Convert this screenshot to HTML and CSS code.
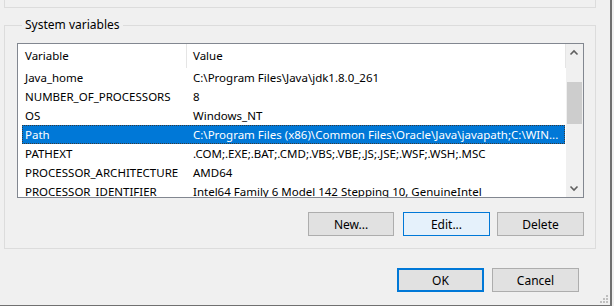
FILE: index.html
```html
<!DOCTYPE html>
<html>
<head>
<meta charset="utf-8">
<link rel="stylesheet" href="styles.css">
</head>
<body>
<div class="window">
  <div class="top-group"></div>
  <fieldset class="group">
    <legend class="legend">System variables</legend>
    <div class="list">
      <div class="list-body">
        <div class="header">
          <div class="hcell hcell-var">Variable</div>
          <div class="hcell hcell-val">Value</div>
        </div>
        <div class="row"><span class="c1">Java_home</span><span class="c2">C:\Program Files\Java\jdk1.8.0_261</span></div>
        <div class="row"><span class="c1">NUMBER_OF_PROCESSORS</span><span class="c2">8</span></div>
        <div class="row"><span class="c1">OS</span><span class="c2">Windows_NT</span></div>
        <div class="row selected"><span class="c1">Path</span><span class="c2">C:\Program Files (x86)\Common Files\Oracle\Java\javapath;C:\WIN...</span></div>
        <div class="row"><span class="c1">PATHEXT</span><span class="c2">.COM;.EXE;.BAT;.CMD;.VBS;.VBE;.JS;.JSE;.WSF;.WSH;.MSC</span></div>
        <div class="row"><span class="c1">PROCESSOR_ARCHITECTURE</span><span class="c2">AMD64</span></div>
        <div class="row"><span class="c1">PROCESSOR_IDENTIFIER</span><span class="c2">Intel64 Family 6 Model 142 Stepping 10, GenuineIntel</span></div>
      </div>
      <div class="scrollbar">
        <svg class="arrow" width="16" height="17" viewBox="0 0 16 17"><path d="M4.5 10.5 L8 7 L11.5 10.5" fill="none" stroke="#606060" stroke-width="1.6"/></svg>
        <div class="track"><div class="thumb"></div></div>
        <svg class="arrow" width="16" height="17" viewBox="0 0 16 17"><path d="M4.5 6.5 L8 10 L11.5 6.5" fill="none" stroke="#606060" stroke-width="1.6"/></svg>
      </div>
    </div>
    <div class="group-buttons">
      <button class="btn btn-new">New...</button>
      <button class="btn btn-edit">Edit...</button>
      <button class="btn btn-delete">Delete</button>
    </div>
  </fieldset>
  <div class="dialog-buttons">
    <button class="btn btn-ok">OK</button>
    <button class="btn btn-cancel">Cancel</button>
  </div>
  <svg class="grip" width="12" height="12" viewBox="0 0 12 12">
    <rect x="8" y="2" width="2" height="2" fill="#bfbfbf"/>
    <rect x="5" y="5" width="2" height="2" fill="#bfbfbf"/>
    <rect x="8" y="5" width="2" height="2" fill="#bfbfbf"/>
    <rect x="2" y="8" width="2" height="2" fill="#bfbfbf"/>
    <rect x="5" y="8" width="2" height="2" fill="#bfbfbf"/>
    <rect x="8" y="8" width="2" height="2" fill="#bfbfbf"/>
  </svg>
</div>
</body>
</html>
```
FILE: styles.css
```css
html, body {
  margin: 0;
  padding: 0;
  background: #f0f0f0;
}
body {
  width: 614px;
  height: 306px;
  overflow: hidden;
  font-family: "Noto Sans", "Open Sans", sans-serif;
  font-size: 11.5px;
  color: #000;
}
.window {
  position: relative;
  box-sizing: border-box;
  width: 612px;
  height: 306px;
  border-right: 2px solid #707070;
  border-bottom: 1px solid #707070;
  background: #f0f0f0;
}
.top-group {
  box-sizing: border-box;
  margin-left: 4px;
  width: 592px;
  height: 8px;
  border: 1px solid #dcdcdc;
  border-top: none;
}
.group {
  box-sizing: border-box;
  margin: 9px 0 0 4px;
  width: 592px;
  height: 232px;
  padding: 0 11px 0 12px;
  border: 1px solid #dcdcdc;
  min-width: 0;
}
.legend {
  padding: 0 3px;
  margin-left: 5px;
  line-height: 16px;
  height: 16px;
  font-size: 12px;
}
.list {
  margin-top: 10px;
  box-sizing: border-box;
  height: 155px;
  border: 1px solid #828790;
  background: #fff;
  display: flex;
}
.list-body {
  flex: 1;
  overflow: hidden;
}
.header {
  display: flex;
  height: 24px;
  align-items: center;
}
.hcell {
  height: 24px;
  line-height: 24px;
  box-sizing: border-box;
}
.hcell-var {
  width: 169px;
  padding-left: 7px;
  border-right: 1px solid #e5e5e5;
}
.hcell-val {
  flex: 1;
  padding-left: 6px;
  border-right: 1px solid #e5e5e5;
}
.row {
  display: flex;
  height: 19px;
  line-height: 19px;
  margin-left: 4px;
  margin-right: 1px;
  white-space: nowrap;
  box-sizing: border-box;
}
.c1 {
  width: 165px;
  padding-left: 3px;
  flex: none;
  box-sizing: border-box;
}
.c2 {
  padding-left: 6px;
}
.selected {
  background: #0078d7;
  color: #fff;
  outline: 1px dotted #3a3a3a;
  outline-offset: -1px;
}
.scrollbar {
  width: 17px;
  background: #f0f0f0;
  display: flex;
  flex-direction: column;
}
.arrow {
  display: block;
  flex: none;
}
.track {
  flex: 1;
  padding-top: 21px;
}
.thumb {
  margin: 0 1px;
  height: 42px;
  background: #cdcdcd;
}
.group-buttons {
  display: flex;
  justify-content: flex-end;
  margin-top: 14px;
}
.btn {
  box-sizing: border-box;
  width: 87px;
  height: 24px;
  background: #e1e1e1;
  border: 1px solid #adadad;
  font-family: inherit;
  font-size: 12px;
  color: #000;
  padding: 0;
  margin: 0;
}
.btn-new {
  width: 86px;
  margin-right: 9px;
}
.btn-edit {
  background: #e5f1fb;
  border-color: #0078d7;
  margin-right: 7px;
}
.btn-ok {
  border: 2px solid #0078d7;
}
.dialog-buttons {
  display: flex;
  justify-content: flex-end;
  gap: 8px;
  margin-top: 19px;
  padding-right: 31px;
}
.grip {
  position: absolute;
  right: 0;
  bottom: 0;
}
```
